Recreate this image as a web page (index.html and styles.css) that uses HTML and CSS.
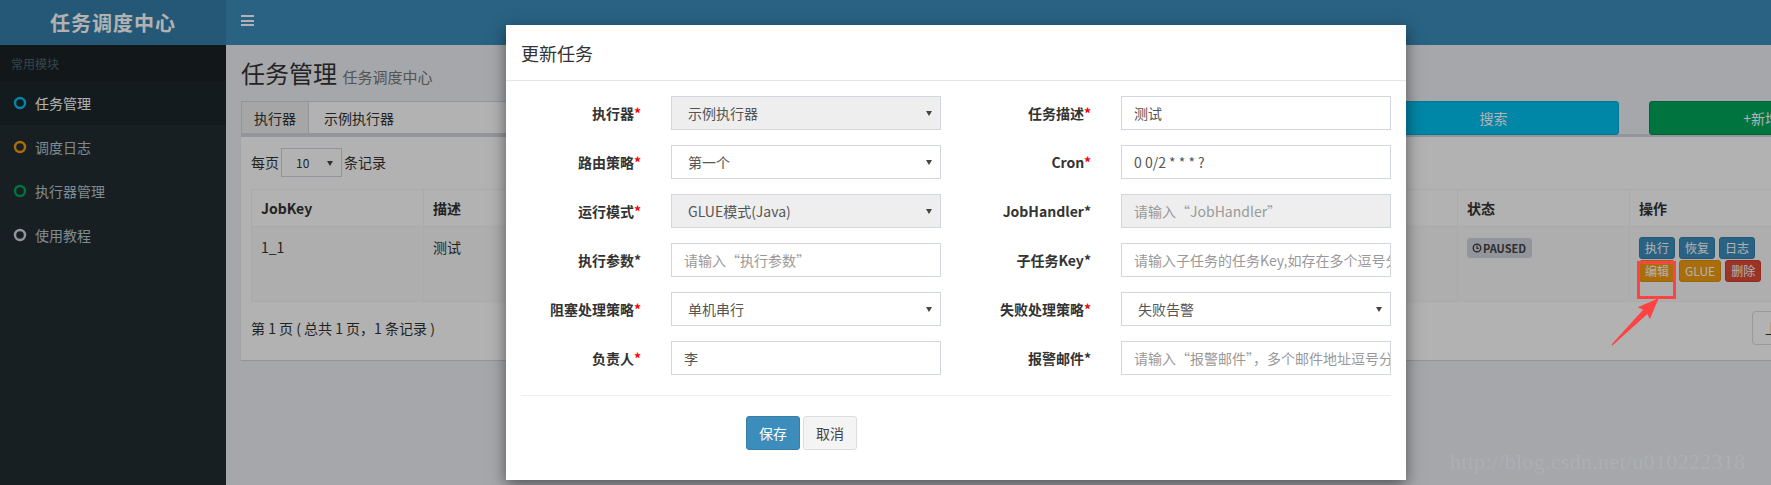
FILE: index.html
```html
<!DOCTYPE html>
<html lang="zh">
<head>
<meta charset="utf-8">
<title>任务调度中心</title>
<link rel="stylesheet" href="styles.css">
</head>
<body>
<div class="wrapper">
  <header class="main-header">
    <div class="logo">任务调度中心</div>
    <nav class="navbar"><span class="toggle"><i></i><i></i><i></i></span></nav>
  </header>
  <div class="layout">
    <aside class="sidebar">
      <div class="sidebar-header">常用模块</div>
      <div class="menu-item active"><svg class="ico" viewBox="0 0 14 14"><circle cx="7" cy="7" r="5" fill="none" stroke="#00c0ef" stroke-width="2.4"/></svg><span>任务管理</span></div>
      <div class="menu-item"><svg class="ico" viewBox="0 0 14 14"><circle cx="7" cy="7" r="5" fill="none" stroke="#f39c12" stroke-width="2.4"/></svg><span>调度日志</span></div>
      <div class="menu-item"><svg class="ico" viewBox="0 0 14 14"><circle cx="7" cy="7" r="5" fill="none" stroke="#00a65a" stroke-width="2.4"/></svg><span>执行器管理</span></div>
      <div class="menu-item"><svg class="ico" viewBox="0 0 14 14"><circle cx="7" cy="7" r="5" fill="none" stroke="#d2d6de" stroke-width="2.4"/></svg><span>使用教程</span></div>
    </aside>
    <main class="content">
      <div class="content-header"><h1>任务管理 <small>任务调度中心</small></h1></div>
      <div class="toolbar">
        <div class="input-group"><span class="addon">执行器</span><span class="tsel">示例执行器</span></div>
        <div class="input-group"></div>
        <div class="input-group"></div>
        <div class="btn-block info">搜索</div>
        <div class="btn-block success">+新增任务</div>
      </div>
      <div class="box">
        <div class="length-row">每页 <span class="len-select">10<b class="caret"></b></span> 条记录</div>
        <table class="grid">
          <colgroup><col class="c1"><col class="c2"><col class="c2"><col class="c2"><col class="c2"><col class="c1"><col class="c3"></colgroup>
          <thead><tr><th>JobKey</th><th>描述</th><th></th><th></th><th></th><th>状态</th><th>操作</th></tr></thead>
          <tbody><tr>
            <td>1_1</td><td>测试</td><td></td><td></td><td></td>
            <td><span class="label"><svg class="clock" viewBox="0 0 10 10"><circle cx="5" cy="5" r="3.8" fill="none" stroke="#444" stroke-width="1.4"/><path d="M5 2.8V5.3H6.8" fill="none" stroke="#444" stroke-width="1.2"/></svg>PAUSED</span></td>
            <td><div class="ops"><span class="xbtn primary">执行</span><span class="xbtn primary">恢复</span><span class="xbtn primary">日志</span></div><div class="ops"><span class="xbtn warning">编辑</span><span class="xbtn warning">GLUE</span><span class="xbtn danger">删除</span></div></td>
          </tr></tbody>
        </table>
        <div class="info-row"><span>第 1 页 ( 总共 1 页，1 条记录 )</span><span class="pager">上页</span></div>
      </div>
    </main>
  </div>
</div>

<div class="backdrop"></div>

<div class="modal">
  <div class="modal-header">更新任务</div>
  <div class="modal-body">
    <div class="form-group">
      <label class="lbl">执行器<em class="req">*</em></label><div class="fc"><div class="ctrl select disabled">示例执行器</div></div>
      <label class="lbl">任务描述<em class="req">*</em></label><div class="fc"><div class="ctrl">测试</div></div>
    </div>
    <div class="form-group">
      <label class="lbl">路由策略<em class="req">*</em></label><div class="fc"><div class="ctrl select">第一个</div></div>
      <label class="lbl">Cron<em class="req">*</em></label><div class="fc"><div class="ctrl">0 0/2 * * * ?</div></div>
    </div>
    <div class="form-group">
      <label class="lbl">运行模式<em class="req">*</em></label><div class="fc"><div class="ctrl select disabled">GLUE模式(Java)</div></div>
      <label class="lbl">JobHandler<em>*</em></label><div class="fc"><div class="ctrl disabled ph">请输入“JobHandler”</div></div>
    </div>
    <div class="form-group">
      <label class="lbl">执行参数<em>*</em></label><div class="fc"><div class="ctrl ph">请输入“执行参数”</div></div>
      <label class="lbl">子任务Key<em>*</em></label><div class="fc"><div class="ctrl ph">请输入子任务的任务Key,如存在多个逗号分隔</div></div>
    </div>
    <div class="form-group">
      <label class="lbl">阻塞处理策略<em class="req">*</em></label><div class="fc"><div class="ctrl select">单机串行</div></div>
      <label class="lbl">失败处理策略<em class="req">*</em></label><div class="fc"><div class="ctrl select">失败告警</div></div>
    </div>
    <div class="form-group">
      <label class="lbl">负责人<em class="req">*</em></label><div class="fc"><div class="ctrl">李</div></div>
      <label class="lbl">报警邮件<em>*</em></label><div class="fc"><div class="ctrl ph">请输入“报警邮件”，多个邮件地址逗号分隔</div></div>
    </div>
    <hr class="sep">
    <div class="form-group actions">
      <span class="mbtn save">保存</span><span class="mbtn cancel">取消</span>
    </div>
  </div>
</div>

<svg class="annot" width="1771" height="485" viewBox="0 0 1771 485">
  <rect x="1638.5" y="262.5" width="36" height="35" fill="none" stroke="#ff4242" stroke-width="3"/>
  <polygon transform="translate(1612 345) rotate(-45)" points="0,-0.6 47,-3 45,-8.5 66,0 45,8.5 47,3 0,0.6" fill="#ff4242"/>
</svg>
<div class="watermark">http://blog.csdn.net/u010222318</div>
</body>
</html>
```
FILE: styles.css
```css
* { box-sizing: border-box; }
html, body { margin: 0; padding: 0; }
body {
  width: 1771px;
  height: 485px;
  overflow: hidden;
  position: relative;
  font-family: "Noto Sans CJK SC", "Noto Sans", sans-serif;
  font-size: 14px;
  color: #333;
  background: #ecf0f5;
}

.wrapper { width: 1916px; }

.main-header { display: flex; height: 45px; }
.logo {
  width: 226px; flex: none;
  background: #367fa9; color: #fff;
  font-size: 20px; font-weight: bold; letter-spacing: 1px;
  display: flex; align-items: center; justify-content: center;
}
.navbar { flex: 1; background: #3c8dbc; padding: 15px 0 0 15px; }
.toggle { display: flex; flex-direction: column; gap: 2.5px; width: 13px; }
.toggle i { display: block; height: 2px; background: #fff; }

.layout { display: flex; height: 440px; }
.sidebar { width: 226px; flex: none; background: #222d32; }
.sidebar-header {
  height: 36px; background: #1a2226; color: #4b646f;
  font-size: 12px; padding-left: 11px;
  display: flex; align-items: center;
}
.menu-item {
  height: 44px; display: flex; align-items: center; gap: 8px;
  padding-left: 13px; color: #b8c7ce;
}
.menu-item.active { background: #1e282c; color: #fff; }
.ico { width: 14px; height: 14px; }

.content { width: 1690px; flex: none; padding: 0 15px; }
.content-header { padding-top: 13px; height: 56px; }
.content-header h1 { margin: 0; font-size: 24px; font-weight: normal; line-height: 30px; color: #333; }
.content-header small { font-size: 15px; color: #777; }

.toolbar {
  display: grid;
  grid-template-columns: 392.5px 392.5px 251.7px 251.7px 251.7px;
  column-gap: 30px;
  height: 33px;
}
.input-group { display: flex; height: 33px; background: #fff; border: 1px solid #d2d6de; }
.addon { padding: 0 12px; background: #eee; border-right: 1px solid #d2d6de; display: flex; align-items: center; }
.tsel { padding-left: 15px; display: flex; align-items: center; flex: 1; }
.btn-block { border-radius: 3px; color: #fff; display: flex; align-items: center; justify-content: center; height: 34px; }
.btn-block.info { background: #00c0ef; border: 1px solid #00acd6; }
.btn-block.success { background: #00a65a; border: 1px solid #008d4c; }

.box {
  width: 1660px; height: 226px;
  background: #fff;
  border-top: 3px solid #d2d6de;
  box-shadow: 0 1px 1px rgba(0,0,0,0.1);
  padding: 10px;
}
.length-row { height: 30px; display: flex; align-items: center; gap: 0; margin-bottom: 12px; }
.len-select {
  width: 61px; height: 29px; margin: 0 2px;
  border: 1px solid #d2d6de; background: #fff;
  font-size: 12px; padding-left: 14px;
  display: flex; align-items: center; position: relative;
}
.caret {
  position: absolute; right: 8px; top: 12px;
  border-left: 3.5px solid transparent; border-right: 3.5px solid transparent; border-top: 5px solid #444;
}

.grid { width: 1640px; border-collapse: collapse; table-layout: fixed; }
.grid .c1 { width: 172px; }
.grid .c2 { width: 258.5px; }
.grid .c3 { width: 262px; }
.grid th, .grid td {
  border: 1px solid #f4f4f4; text-align: left; vertical-align: top;
  padding: 8px 9px; line-height: 20px;
}
.grid th { height: 37px; }
.grid td { height: 75px; padding-top: 10px; }
.grid tbody tr { background: #f9f9f9; }

.label {
  display: inline-flex; align-items: center; gap: 1px;
  height: 20px; padding: 0 6px 0 5px; margin-top: 1px;
  background: #d2d6de; color: #444; border-radius: 3px;
  font-size: 11px; font-weight: bold; line-height: 1;
}
.clock { width: 10px; height: 10px; }

.ops { display: flex; gap: 4px; margin-bottom: 1px; }
.xbtn {
  display: inline-flex; align-items: center; justify-content: center;
  height: 22px; padding: 0 5px; border-radius: 3px;
  color: #fff; font-size: 12px; border: 1px solid;
}
.xbtn.primary { background: #3c8dbc; border-color: #367fa9; }
.xbtn.warning { background: #f39c12; border-color: #e08e0b; }
.xbtn.danger { background: #dd4b39; border-color: #d73925; }

.info-row { margin-top: 9px; height: 34px; display: flex; align-items: center; justify-content: space-between; }
.pager {
  height: 34px; padding: 0 12px; display: flex; align-items: center;
  background: #fff; border: 1px solid #ddd; border-radius: 4px; margin-right: 85px;
}

.backdrop { position: absolute; left: 0; top: 0; width: 1771px; height: 485px; background: rgba(0,0,0,0.3); }

.modal {
  position: absolute; left: 506px; top: 25px; width: 900px; height: 455px;
  background: #fff; box-shadow: 0 5px 15px rgba(0,0,0,0.5);
}
.modal-header {
  height: 56px; padding: 0 15px; border-bottom: 1px solid #e5e5e5;
  font-size: 18px; display: flex; align-items: center; color: #333;
}
.modal-body { padding: 15px; }
.form-group { display: flex; height: 34px; margin: 0 -15px 15px; }
.lbl {
  width: 150px; padding: 0 15px 0 0; text-align: right;
  font-weight: bold; line-height: 34px;
}
.lbl em { font-style: normal; color: #333; }
.lbl em.req { color: #f00; }
.fc { width: 300px; padding: 0 15px; }
.ctrl {
  height: 34px; border: 1px solid #d2d6de; background: #fff;
  padding: 0 12px; display: flex; align-items: center; color: #555;
  white-space: nowrap; overflow: hidden; position: relative;
}
.ctrl.select { padding-left: 16px; }
.ctrl.select::after {
  content: ""; position: absolute; right: 8px; top: 14px;
  border-left: 3.5px solid transparent; border-right: 3.5px solid transparent; border-top: 5px solid #444;
}
.ctrl.disabled { background: #eee; }
.ctrl.ph { color: #999; }
.sep { border: 0; border-top: 1px solid #eee; margin: 20px 0; }
.actions { padding-left: 240px; gap: 3px; margin-bottom: 15px; }
.mbtn {
  height: 34px; padding: 0 12px; border-radius: 3px; border: 1px solid;
  display: flex; align-items: center;
}
.mbtn.save { background: #3c8dbc; border-color: #367fa9; color: #fff; }
.mbtn.cancel { background: #f4f4f4; border-color: #ddd; color: #444; }

.annot { position: absolute; left: 0; top: 0; pointer-events: none; }
.watermark {
  position: absolute; left: 1450px; top: 449px;
  font-family: "Liberation Serif", serif; font-size: 22px; letter-spacing: 0.3px;
  color: rgba(255,255,255,0.1); white-space: nowrap;
}
```
